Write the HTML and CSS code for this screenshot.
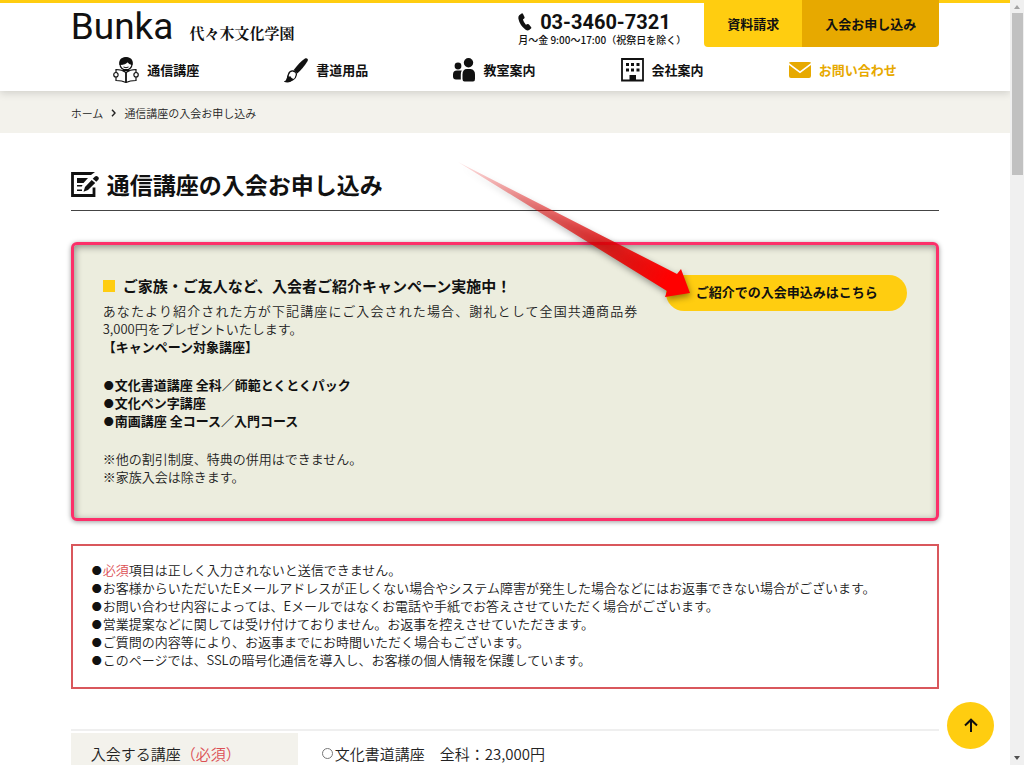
FILE: index.html
```html
<!DOCTYPE html>
<html lang="ja">
<head>
<meta charset="utf-8">
<meta name="viewport" content="width=device-width, initial-scale=1">
<title>通信講座の入会お申し込み | 代々木文化学園</title>
<link rel="stylesheet" href="styles.css">
</head>
<body>
<div class="window">
  <div class="page">
    <header class="header">
      <div class="wrap header-top">
        <a class="logo" href="#"><span class="logo-main">Bunka</span><span class="logo-sub">代々木文化学園</span></a>
        <div class="header-side">
          <div class="contact">
            <a class="tel" href="tel:0334607321">
              <svg class="tel-icon" viewBox="0 0 14 18"><path d="M1.2 2.2 3.6.5q.8-.5 1.3.3L6.500 4q.4.9-.3 1.500L4.900 6.600q.9 3 3 5.200l1.700-.7q.8-.3 1.400.4l2.200 2.700q.5.8-.2 1.400l-1.800 1.400q-1.600 1-3.600-.3Q1.800 12.500.4 5.800 0 3.200 1.200 2.200z"/></svg>
              <span>03-3460-7321</span>
            </a>
            <p class="hours">月～金 9:00～17:00（祝祭日を除く）</p>
          </div>
          <div class="cta">
            <a class="cta-link" href="#">資料請求</a>
            <a class="cta-link cta-join" href="#">入会お申し込み</a>
          </div>
        </div>
      </div>
      <nav class="wrap nav">
        <a class="nav-link" href="#">
          <svg width="26" height="26" viewBox="0 0 26 26" fill="none" stroke="#111" stroke-width="1.200">
            <circle cx="13" cy="7" r="6" fill="#fff"/>
            <path d="M7 7.500C6 2.500 9.500.6 13 .6s7 2 6 6.900c-2-.5-3.500-1.500-4.500-3C13 6.500 10 7.500 7 7.500z" fill="#111"/>
            <path d="M10.500 10q2.500 1.500 5 0" stroke-width="1"/>
            <path d="M13 15.500c-3-2.200-6.500-2.900-10-3v11c3.500 0 7 .4 10 2 3-1.600 6.500-2 10-2v-11c-3.500.1-7 .8-10 3z" fill="#fff"/>
            <path d="M13 15v10M10 13h6" stroke-width="1.800"/>
            <path d="M3 15.500c-3 0-3 4.500 0 4.500s2.600-4.500 0-4.500zM23 15.500c3 0 3 4.500 0 4.500s-2.600-4.500 0-4.500z" fill="#fff"/>
          </svg><span>通信講座</span></a>
        <a class="nav-link" href="#">
          <svg width="24" height="25" viewBox="0 0 24 25">
            <path d="M21 .6c1.800-1.200 3.600.5 2.600 2.300-2.800 4.500-6.500 9.200-10.300 12.700L9.700 12C13 7.700 17 3.300 21 .6z" fill="#111"/>
            <path d="M9 13c2.500.4 3.700 2 3.300 4-.5 3.500-4 6.500-10.300 6.300 2-1.300 1.500-4 2.500-7C5.200 14.200 7 12.800 9 13z" fill="#fff" stroke="#111" stroke-width="1.300"/>
            <path d="M0 23.800c2.200-.8 2.800-3 3.400-6.500 1.600 2.200 1.900.8 3 1 .8 1.500 1.500 2 3.200 2.700C7.500 24 4 25.200 0 23.800z" fill="#111"/>
          </svg><span>書道用品</span></a>
        <a class="nav-link" href="#">
          <svg width="22" height="24" viewBox="0 0 22 24" fill="#111">
            <circle cx="5" cy="8" r="3.400"/><path d="M4 12.500h4.800q-1 1.700-1 4v5H3Q0 21.500 0 18.500v-2q0-4 4-4z"/>
            <circle cx="15.500" cy="4.800" r="4.700"/><path d="M14 11h3.500q4.500.5 4.500 5.500V21q0 2.500-2 2.500h-8.500q-2 0-2-2.500v-4.500q0-5.500 4.500-5.500z"/>
          </svg><span>教室案内</span></a>
        <a class="nav-link" href="#">
          <svg width="23" height="24" viewBox="0 0 23 24">
            <path d="M1 1h21v21.500H1z" fill="none" stroke="#111" stroke-width="1.800"/>
            <path d="M5 5h3v3H5zM10 5h3v3h-3zM15.500 5h3v3h-3zM5 10.500h3v3H5zM10 10.500h3v3h-3zM15.500 10.500h3v3h-3zM8.500 17H15v6H8.500z" fill="#111"/>
          </svg><span>会社案内</span></a>
        <a class="nav-link nav-contact" href="#">
          <svg width="22" height="16" viewBox="0 0 22 16" fill="#e7a900"><path d="M2 0h18q2 0 2 1L11 9.200 0 1q0-1 2-1z"/><path d="M0 3l11 8.300L22 3v11q0 2-2 2H2q-2 0-2-2z"/></svg>
          <span>お問い合わせ</span></a>
      </nav>
    </header>

    <div class="crumbs">
      <nav class="wrap crumb-list" aria-label="パンくず">
        <a href="#">ホーム</a>
        <svg width="5" height="8" viewBox="0 0 5 8" fill="none" stroke="#222" stroke-width="1.400"><path d="M1 .8 4 4 1 7.200"/></svg>
        <span>通信講座の入会お申し込み</span>
      </nav>
    </div>

    <main class="wrap main">
      <h1 class="title">
        <svg width="28" height="26" viewBox="0 0 28 26">
          <path d="M19 1.500H1.500v22h21.500v-8" fill="none" stroke="#111" stroke-width="2.800"/>
          <path d="M19 .1h5L20 3h-3z" fill="#111"/>
          <path d="M6 6h11l-4.500 5H6zM6 13h5.500l-.7 1.500H6zM6 17.500h5V19H6z" fill="#111"/>
          <path d="M24 4.500q1.500-1 3 .3t.3 3l-2 2-3.600-3zM20.700 8l3.500 3-7.200 7-4.500 1.800 1.500-4.800z" fill="#111"/>
        </svg><span>通信講座の入会お申し込み</span></h1>

      <section class="campaign">
        <div class="campaign-text">
          <h2 class="campaign-title">ご家族・ご友人など、入会者ご紹介キャンペーン実施中！</h2>
          <p class="lead">あなたより紹介された方が下記講座にご入会された場合、謝礼として全国共通商品券<span class="amount">3,000円を</span>プレゼントいたします。</p>
          <p class="strong">【キャンペーン対象講座】</p>
          <ul class="plain strong">
            <li><span class="dot">●</span>文化書道講座 全科／師範とくとくパック</li>
            <li><span class="dot">●</span>文化ペン字講座</li>
            <li><span class="dot">●</span>南画講座 全コース／入門コース</li>
          </ul>
          <ul class="plain">
            <li>※他の割引制度、特典の併用はできません。</li>
            <li>※家族入会は除きます。</li>
          </ul>
        </div>
        <a class="campaign-link" href="#">ご紹介での入会申込みはこちら</a>
      </section>

      <ul class="notice">
        <li><span class="dot">●</span><span class="required">必須</span>項目は正しく入力されないと送信できません。</li>
        <li><span class="dot">●</span>お客様からいただいたEメールアドレスが正しくない場合やシステム障害が発生した場合などにはお返事できない場合がございます。</li>
        <li><span class="dot">●</span>お問い合わせ内容によっては、Eメールではなくお電話や手紙でお答えさせていただく場合がございます。</li>
        <li><span class="dot">●</span>営業提案などに関しては受け付けておりません。お返事を控えさせていただきます。</li>
        <li><span class="dot">●</span>ご質問の内容等により、お返事までにお時間いただく場合もございます。</li>
        <li><span class="dot">●</span>このページでは、SSLの暗号化通信を導入し、お客様の個人情報を保護しています。</li>
      </ul>

      <form class="form">
        <div class="form-row" role="group" aria-labelledby="course-label">
          <div class="form-label" id="course-label">入会する講座<span class="required">（必須）</span></div>
          <div class="form-field">
            <input class="radio" type="radio" name="course" id="course-1"><label for="course-1">文化書道講座　全科：23,000円</label>
          </div>
        </div>
      </form>
    </main>

    <svg class="pointer" width="240" height="144" viewBox="0 0 240 144" aria-hidden="true">
      <defs>
        <linearGradient id="fade" gradientUnits="userSpaceOnUse" x1="0" y1="0" x2="220" y2="125">
          <stop offset="0" stop-color="#e60000" stop-opacity="0.100"/>
          <stop offset="0.300" stop-color="#e30000" stop-opacity="0.450"/>
          <stop offset="0.700" stop-color="#df0000" stop-opacity="0.830"/>
          <stop offset="0.950" stop-color="#ff0000"/>
        </linearGradient>
      </defs>
      <path d="M0 0 219 112 223 107 232 131 207 135 209 129z" fill="url(#fade)"/>
    </svg>
    <a class="to-top" href="#" aria-label="ページの先頭へ">
      <svg width="14" height="15" viewBox="0 0 14 15" fill="none" stroke="#111" stroke-width="2"><path d="M7 14V2M1 7.500 7 1.700l6 5.800"/></svg>
    </a>
  </div>
  <div class="scrollbar" aria-hidden="true">
    <span class="arrow arrow-up"></span>
    <span class="thumb"></span>
    <span class="arrow arrow-down"></span>
  </div>
</div>
</body>
</html>
```
FILE: styles.css
```css
* { box-sizing: border-box; }
body {
  margin: 0;
  color: #222;
  background: #fff;
  font: 350 13px/18px "Noto Sans CJK JP", sans-serif;
}
a { color: inherit; text-decoration: none; }
h1, h2, p, ul { margin: 0; padding: 0; }
ul { list-style: none; }
svg { display: block; flex: none; }

.window { display: flex; height: 100vh; overflow: hidden; }
.page { position: relative; flex: 1; min-width: 0; overflow: hidden; }
.wrap { width: 86%; margin: 0 auto; }

.header {
  position: relative;
  border-top: 3px solid #ffcd10;
  background: #fff;
  box-shadow: 0 2px 8px rgba(0, 0, 0, 0.15);
}
.header-top { display: flex; justify-content: space-between; height: 44px; }
.logo { display: flex; align-items: baseline; gap: 16px; color: #111; line-height: 48px; }
.logo-main { font-family: Roboto, sans-serif; font-size: 37px; font-weight: 400; }
.logo-sub { font-family: "Noto Serif CJK JP", "Noto Sans CJK JP", serif; font-size: 15px; font-weight: 700; }
.header-side { display: flex; gap: 18px; }
.contact { padding-top: 8px; color: #111; }
.tel { display: flex; align-items: center; gap: 8px; font: 700 20px/22px Roboto, sans-serif; }
.tel-icon { width: 14px; height: 18px; fill: #111; }
.hours { font-size: 10px; font-weight: 500; line-height: 14px; }
.cta { display: flex; margin-top: -3px; height: 47px; border-radius: 0 0 4px 4px; overflow: hidden; }
.cta-link { display: flex; align-items: center; padding: 0 23px; background: #ffcd10; color: #111; font-weight: 700; }
.cta-join { background: #e7a900; }
.nav { display: flex; justify-content: space-around; height: 44px; padding-top: 2px; }
.nav-link { display: flex; align-items: center; gap: 8px; color: #111; font-weight: 700; }
.nav-contact { color: #e7a900; }

.crumbs { background: #f3f2ec; }
.crumb-list { display: flex; align-items: center; gap: 8px; height: 42px; padding-top: 2px; font-size: 11px; }

.title {
  display: flex;
  align-items: center;
  gap: 8px;
  margin-top: 34px;
  padding-bottom: 8px;
  border-bottom: 1px solid #444;
  color: #111;
  font-size: 23px;
  line-height: 35px;
}
.campaign {
  display: flex;
  align-items: flex-start;
  justify-content: space-between;
  gap: 29px;
  margin: 31px 0 23px;
  padding: 30px 29px;
  min-height: 279px;
  border: 3px solid #fc2f69;
  border-radius: 6px;
  background: #ecedde;
  box-shadow: 0 1px 5px rgba(0, 0, 0, 0.4), inset 1px 2px 7px rgba(0, 0, 0, 0.4);
}
.campaign-text { flex: 1; }
.campaign-title {
  display: flex;
  align-items: center;
  gap: 8px;
  margin-bottom: 5px;
  color: #111;
  font-size: 15px;
  line-height: 22px;
}
.campaign-title::before { content: ""; width: 12px; height: 12px; background: #ffcd10; }
.lead { text-align: justify; }
.amount { white-space: nowrap; }
.plain { margin-top: 20px; }
.strong { color: #111; font-weight: 700; }
.dot { margin: 0 1px; color: #111; font-size: 10px; line-height: 10px; }
.campaign-link {
  width: 241px;
  padding-bottom: 2px;
  border-radius: 18px;
  background: #ffcd10;
  color: #111;
  font-weight: 700;
  line-height: 34px;
  text-align: center;
}
.notice { padding: 15px 18px 18px; border: 2px solid #d9575c; }
.required { color: #dc5055; }

.form { margin-top: 40px; border-top: 2px solid #efefef; padding-top: 2px; font-size: 15px; line-height: 22px; }
.form-row { display: flex; }
.form-label { width: 227px; padding: 10px 20px 40px; background: #f3f2ec; }
.form-field { flex: 1; display: flex; align-items: flex-start; gap: 2px; padding: 10px 24px; }
.radio { appearance: none; width: 11px; height: 11px; margin: 5px 0 0; border: 1px solid #777; border-radius: 50%; background: #fff; }

.pointer { position: absolute; left: 458px; top: 162px; overflow: visible; filter: drop-shadow(1px 3px 3px rgba(0, 0, 0, 0.4)); }
.to-top {
  position: absolute;
  right: 16px;
  bottom: 16px;
  display: flex;
  align-items: center;
  justify-content: center;
  width: 47px;
  height: 47px;
  border-radius: 50%;
  background: #ffcd10;
}
.scrollbar { display: flex; flex-direction: column; align-items: center; width: 14px; padding: 5px 0; background: #f0f0f0; }
.arrow { border: 3px solid transparent; }
.arrow-up { border-top: 0; border-bottom-color: #a3a3a3; border-bottom-width: 4px; }
.arrow-down { margin-top: auto; border-bottom: 0; border-top-color: #505050; border-top-width: 4px; }
.thumb { width: 11px; height: 162px; margin-top: 4px; background: #c1c1c1; }
```
